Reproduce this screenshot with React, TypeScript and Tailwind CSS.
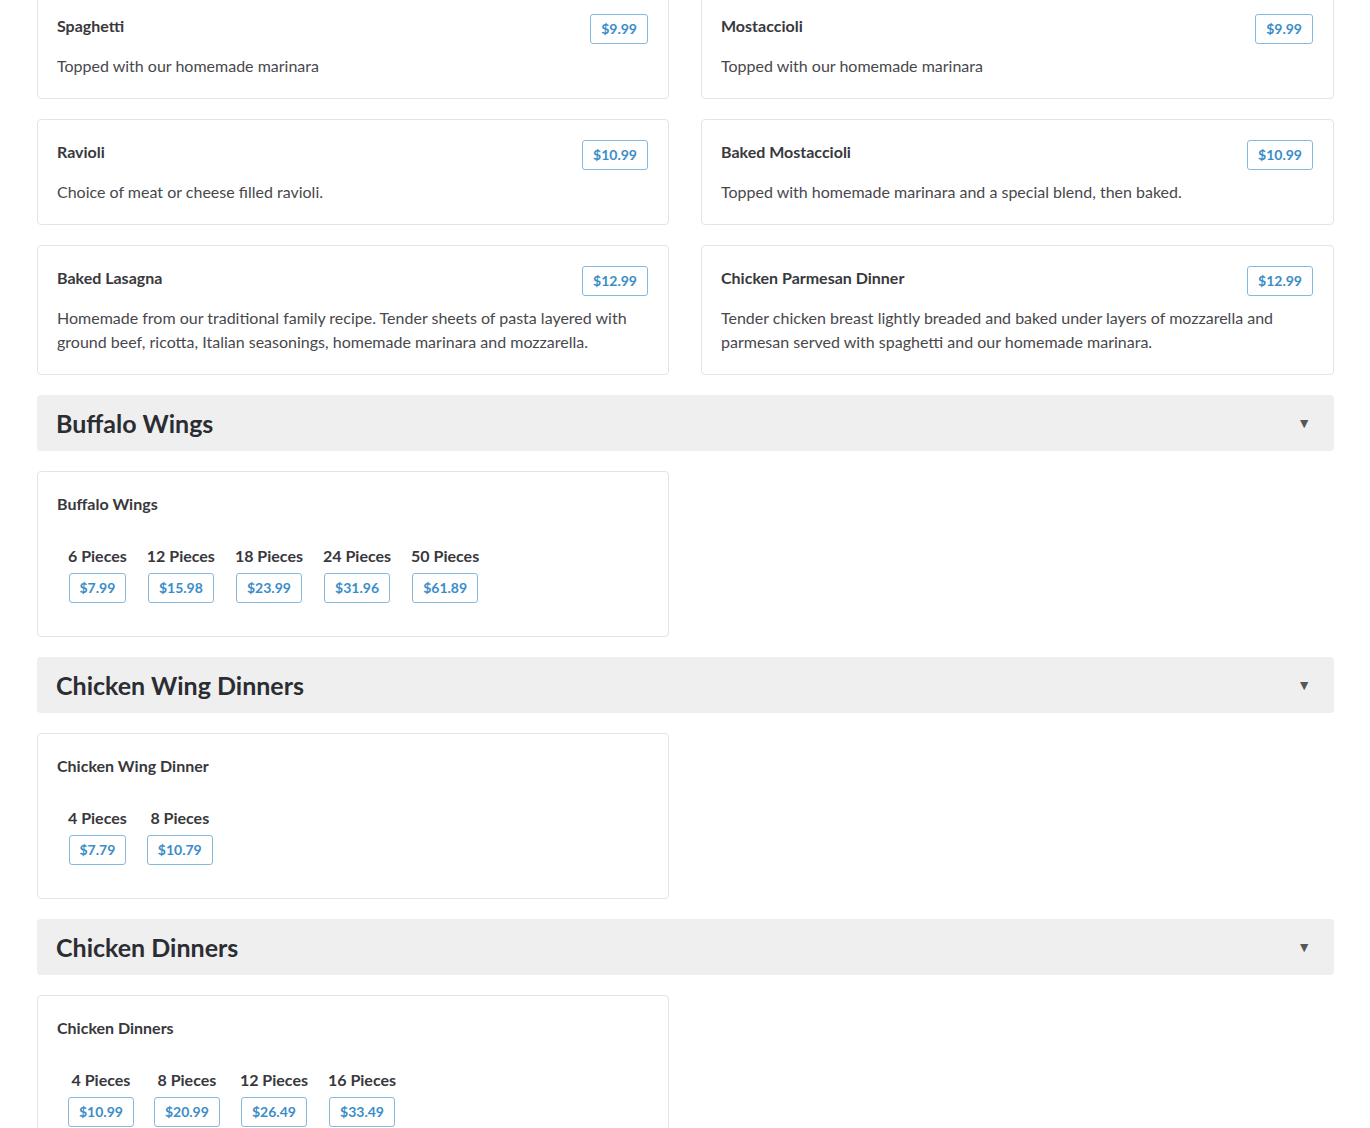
import React from 'react';

interface SingleItem {
  name: string;
  price: string;
  desc: string;
}

interface Option {
  label: string;
  price: string;
}

const pastas: SingleItem[] = [
  { name: 'Spaghetti', price: '$9.99', desc: 'Topped with our homemade marinara' },
  { name: 'Mostaccioli', price: '$9.99', desc: 'Topped with our homemade marinara' },
  { name: 'Ravioli', price: '$10.99', desc: 'Choice of meat or cheese filled ravioli.' },
  {
    name: 'Baked Mostaccioli',
    price: '$10.99',
    desc: 'Topped with homemade marinara and a special blend, then baked.',
  },
  {
    name: 'Baked Lasagna',
    price: '$12.99',
    desc: 'Homemade from our traditional family recipe. Tender sheets of pasta layered with ground beef, ricotta, Italian seasonings, homemade marinara and mozzarella.',
  },
  {
    name: 'Chicken Parmesan Dinner',
    price: '$12.99',
    desc: 'Tender chicken breast lightly breaded and baked under layers of mozzarella and parmesan served with spaghetti and our homemade marinara.',
  },
];

const sections: { title: string; item: string; options: Option[] }[] = [
  {
    title: 'Buffalo Wings',
    item: 'Buffalo Wings',
    options: [
      { label: '6 Pieces', price: '$7.99' },
      { label: '12 Pieces', price: '$15.98' },
      { label: '18 Pieces', price: '$23.99' },
      { label: '24 Pieces', price: '$31.96' },
      { label: '50 Pieces', price: '$61.89' },
    ],
  },
  {
    title: 'Chicken Wing Dinners',
    item: 'Chicken Wing Dinner',
    options: [
      { label: '4 Pieces', price: '$7.79' },
      { label: '8 Pieces', price: '$10.79' },
    ],
  },
  {
    title: 'Chicken Dinners',
    item: 'Chicken Dinners',
    options: [
      { label: '4 Pieces', price: '$10.99' },
      { label: '8 Pieces', price: '$20.99' },
      { label: '12 Pieces', price: '$26.49' },
      { label: '16 Pieces', price: '$33.49' },
    ],
  },
];

function PriceTag({ price }: { price: string }) {
  return (
    <span className="inline-block h-[30px] px-[10px] py-[4px] border border-[#86b9dd] rounded-[3px] text-[14px] leading-[20px] font-bold text-[#3b8dc8] bg-white">
      {price}
    </span>
  );
}

function ItemCard({ item }: { item: SingleItem }) {
  return (
    <div className="bg-white border border-[#e4e4e4] rounded-[4px] pl-[19px] pr-5 py-5">
      <div className="flex justify-between items-start">
        <h3 className="text-[16px] leading-[24px] font-bold text-[#38383d]">{item.name}</h3>
        <PriceTag price={item.price} />
      </div>
      <p className="mt-[10px] text-[16px] leading-[24px] text-[#48484c]">{item.desc}</p>
    </div>
  );
}

function SectionHeader({ title }: { title: string }) {
  return (
    <div className="flex items-center justify-between bg-[#efefef] rounded-[4px] pl-[19px] pr-[23px] py-3">
      <h2 className="text-[25px] leading-[32px] font-bold text-[#2b2d33]">{title}</h2>
      <span className="text-[14px] leading-none text-[#55565c]">▼</span>
    </div>
  );
}

function OptionsCard({ name, options }: { name: string; options: Option[] }) {
  return (
    <div className="bg-white border border-[#e4e4e4] rounded-[4px] pl-[19px] pr-5 py-5">
      <h3 className="text-[16px] leading-[24px] font-bold text-[#38383d]">{name}</h3>
      <div className="flex gap-5 mt-[28px] pl-[11px] pb-[13px]">
        {options.map((o) => (
          <div key={o.label} className="flex flex-col items-center gap-[5px]">
            <span className="text-[16px] leading-[24px] font-bold text-[#38383d]">{o.label}</span>
            <PriceTag price={o.price} />
          </div>
        ))}
      </div>
    </div>
  );
}

export default function App() {
  return (
    <div
      className="min-h-screen bg-white pl-[37px] pr-[36px]"
      style={{ fontFamily: 'Lato, "Open Sans", sans-serif' }}
    >
      <div className="flex flex-col gap-5 mt-[-7px]">
        <div className="grid grid-cols-[632px_633px] gap-x-[32px] gap-y-5">
          {pastas.map((p) => (
            <ItemCard key={p.name} item={p} />
          ))}
        </div>
        {sections.map((s) => (
          <React.Fragment key={s.title}>
            <SectionHeader title={s.title} />
            <div className="grid grid-cols-[632px_633px] gap-x-[32px]">
              <OptionsCard name={s.item} options={s.options} />
            </div>
          </React.Fragment>
        ))}
      </div>
    </div>
  );
}
